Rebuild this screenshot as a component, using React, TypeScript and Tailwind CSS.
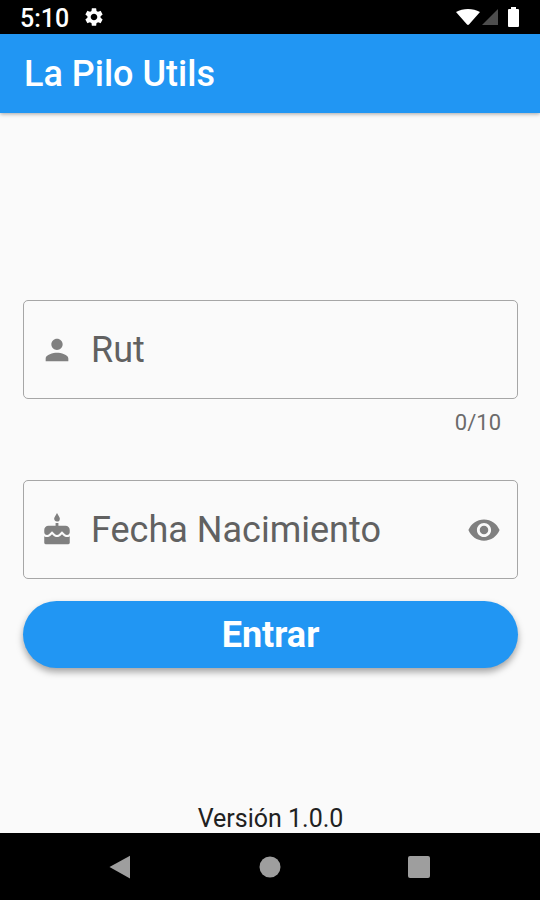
import { useState } from "react";
import {
  MdCake,
  MdPerson,
  MdSettings,
  MdVisibility,
} from "react-icons/md";

function StatusBar() {
  return (
    <div className="flex h-[34px] shrink-0 items-center justify-between bg-black pr-[21px] pl-5 text-white">
      <div className="flex items-center gap-[14px]">
        <span className="pt-1 text-[25px] leading-[30px] font-medium">5:10</span>
        <MdSettings className="size-[22px]" aria-hidden="true" />
      </div>
      <div className="flex items-center gap-[2px]">
        <svg className="h-4 w-6" viewBox="0 0 24 16" aria-hidden="true">
          <path d="M0 3C7-1 17-1 24 3L13.2 15.2Q12 16.6 10.8 15.2Z" fill="currentColor" />
        </svg>
        <svg className="h-4 w-4" viewBox="0 0 16 16" aria-hidden="true">
          <path d="M16 0V16H0Z" fill="#4d4d4d" />
        </svg>
        <svg className="ml-2 h-5 w-[11px]" viewBox="0 0 11 20" aria-hidden="true">
          <path d="M3 0H8V2H10Q11 2 11 3V19Q11 20 10 20H1Q0 20 0 19V3Q0 2 1 2H3Z" fill="currentColor" />
        </svg>
      </div>
    </div>
  );
}

function NavBar() {
  return (
    <nav className="flex h-[67px] shrink-0 items-center justify-around bg-black px-[46px] text-[#9e9e9e]">
      <button type="button" aria-label="Atrás">
        <svg className="size-6" viewBox="0 0 24 24" aria-hidden="true">
          <path d="M21 0.8V23.4L0.5 12Z" fill="currentColor" />
        </svg>
      </button>
      <button type="button" aria-label="Inicio">
        <svg className="size-6" viewBox="0 0 24 24" aria-hidden="true">
          <circle cx="12" cy="12" r="10.5" fill="currentColor" />
        </svg>
      </button>
      <button type="button" aria-label="Recientes">
        <svg className="size-6" viewBox="0 0 24 24" aria-hidden="true">
          <rect x="1" y="1" width="22" height="22" rx="2" fill="currentColor" />
        </svg>
      </button>
    </nav>
  );
}

export default function App() {
  const [rut, setRut] = useState("");
  const [visible, setVisible] = useState(true);

  return (
    <div className="flex min-h-screen flex-col bg-[#fafafa] font-[Roboto,sans-serif]">
      <StatusBar />
      <header className="flex h-[79px] shrink-0 items-center bg-[#2196f3] px-6 pt-px shadow-[0_1px_4px_rgba(0,0,0,0.35)]">
        <h1 className="text-[36px] leading-[44px] font-medium text-white">La Pilo Utils</h1>
      </header>
      <main className="flex grow flex-col pr-[22px] pl-[23px]">
        <form className="flex grow flex-col justify-center pt-[50px]" onSubmit={(e) => e.preventDefault()}>
          <label className="flex h-[99px] items-center gap-[17px] rounded-[5px] border border-[#a6a6a6] px-4">
            <MdPerson className="size-[34px] shrink-0 text-[#808080]" aria-hidden="true" />
            <input
              className="w-full min-w-0 text-[36px] leading-[44px] text-[#616161] outline-none placeholder:text-[#616161]"
              placeholder="Rut"
              aria-label="Rut"
              maxLength={10}
              value={rut}
              onChange={(e) => setRut(e.target.value)}
            />
          </label>
          <p className="mt-3 pr-[17px] text-right text-[22px] leading-6 text-[#6b6b6b]">{rut.length}/10</p>
          <div className="mt-[45px] flex h-[99px] items-center gap-[17px] rounded-[5px] border border-[#a6a6a6] px-4">
            <MdCake className="size-[34px] shrink-0 text-[#808080]" aria-hidden="true" />
            <input
              className="w-full min-w-0 text-[36px] leading-[44px] text-[#616161] outline-none placeholder:text-[#616161]"
              placeholder="Fecha Nacimiento"
              aria-label="Fecha Nacimiento"
              type={visible ? "text" : "password"}
            />
            <button type="button" aria-label="Mostrar u ocultar" onClick={() => setVisible(!visible)}>
              <MdVisibility className="size-[34px] text-[#808080]" aria-hidden="true" />
            </button>
          </div>
          <button
            type="submit"
            className="mt-[22px] h-[67px] rounded-full bg-[#2196f3] text-[36px] leading-[44px] font-bold text-white shadow-[0_4px_7px_rgba(0,0,0,0.35)]"
          >
            Entrar
          </button>
        </form>
        <p className="text-center text-[25px] leading-7 text-[#212121]">Versión 1.0.0</p>
      </main>
      <NavBar />
    </div>
  );
}
